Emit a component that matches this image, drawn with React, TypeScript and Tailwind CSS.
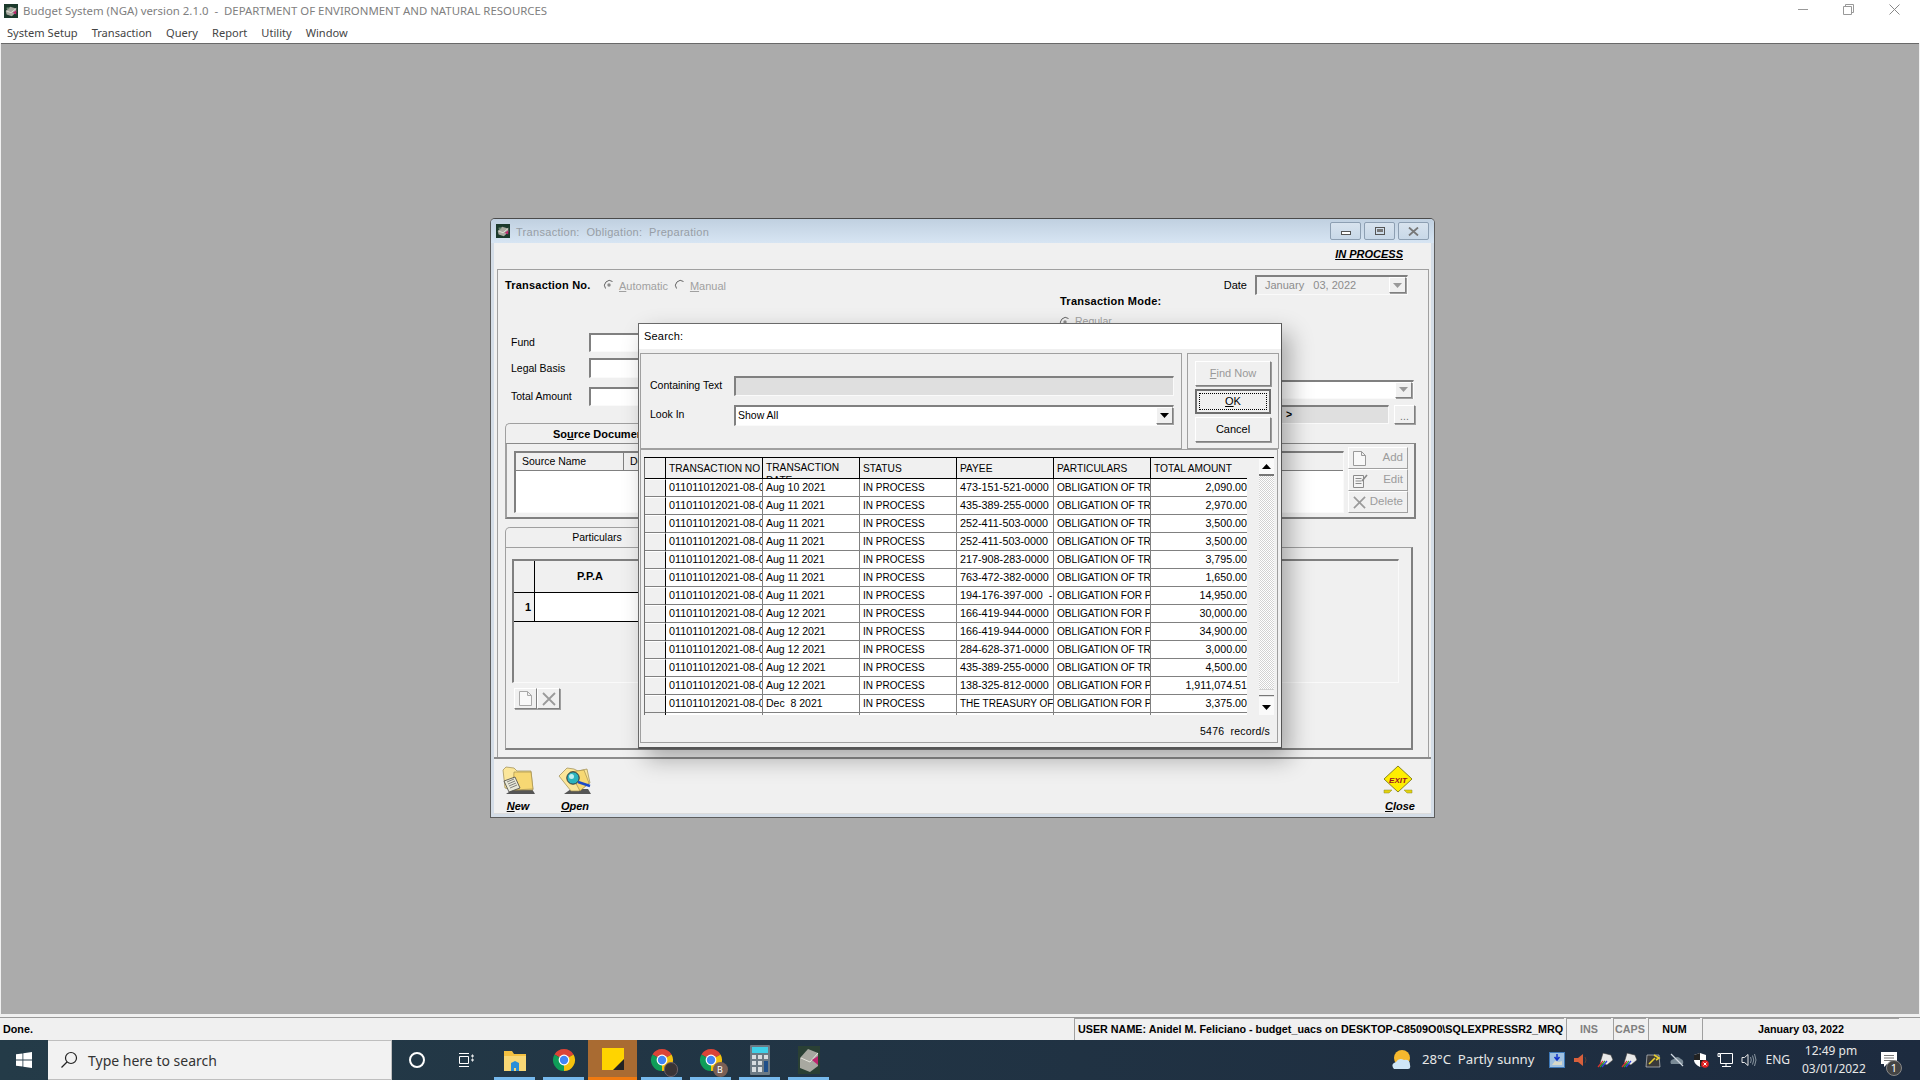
import React from "react";

const ui = "font-['Liberation_Sans',Arial,sans-serif]";
const seg = "font-['Noto_Sans','Open_Sans',sans-serif]";
const raised = "border border-t-white border-l-white border-r-[#808080] border-b-[#808080] shadow-[1px_1px_0_#a0a0a0] bg-[#f0f0f0]";
const sunken = "border-t-2 border-l-2 border-t-[#808080] border-l-[#808080] border-r border-b border-r-[#fafafa] border-b-[#fafafa]";

const AppIcon = ({ s = 14 }: { s?: number }) => (
  <svg width={s} height={s} viewBox="0 0 16 16" className="shrink-0">
    <rect width="16" height="16" fill="#1c3a2c" />
    <path d="M2 8 7 3l7 2v4l-5 5-6-2z" fill="#a9a9a0" />
    <path d="M3 8l5 2 6-5" stroke="#e4e4dc" fill="none" />
    <path d="M10 10l4-3v5z" fill="#c0266e" />
    <path d="M3 4h3v2H3z" fill="#6a8a70" />
  </svg>
);

const Chrome = ({ badge }: { badge?: "b" | "p" }) => (
  <span className="relative block w-[24px] h-[24px]">
    <svg width="24" height="24" viewBox="0 0 24 24">
      <path d="M12 12 2.47 6.5A11 11 0 0 1 21.53 6.5z" fill="#db4437" />
      <path d="M12 12 21.53 6.5A11 11 0 0 1 12 23z" fill="#f4c20d" />
      <path d="M12 12 12 23A11 11 0 0 1 2.47 6.5z" fill="#0f9d58" />
      <circle cx="12" cy="12" r="5.4" fill="#fff" />
      <circle cx="12" cy="12" r="4.2" fill="#4285f4" />
    </svg>
    {badge === "b" && (
      <span className="absolute right-[-5px] bottom-[-5px] w-[15px] h-[15px] rounded-full bg-[#7a5f55] text-white text-[9px] leading-[15px] text-center">B</span>
    )}
    {badge === "p" && <span className="absolute right-[-4px] bottom-[-5px] w-[14px] h-[15px] rounded-full bg-[#3a3436] border border-[#6f6066]" />}
  </span>
);

const Radio = ({ on }: { on?: boolean }) => (
  <svg width="12" height="12" viewBox="0 0 12 12" className="shrink-0">
    <circle cx="6" cy="6" r="5" fill="#f0f0f0" />
    <path d="M2.5 9.5A5 5 0 0 1 9.5 2.5" stroke="#666" fill="none" />
    {on && <circle cx="6" cy="6" r="1.7" fill="#8a8a8a" />}
  </svg>
);

const Arrow = ({ up, color = "#000" }: { up?: boolean; color?: string }) => (
  <svg width="9" height="5" viewBox="0 0 9 5">
    <path d={up ? "M4.5 0 9 5H0z" : "M0 0h9L4.5 5z"} fill={color} />
  </svg>
);

const DocIcon = ({ c = "#9a9a9a" }: { c?: string }) => (
  <svg width="13" height="15" viewBox="0 0 13 15">
    <path d="M.5.5h8l4 4v10H.5zM8.5.5v4h4" fill="#f8f8f8" stroke={c} />
  </svg>
);

const XIcon = ({ s = 14 }: { s?: number }) => (
  <svg width={s} height={s} viewBox="0 0 14 14">
    <path d="M1 1l12 12M13 1 1 13" stroke="#9a9a9a" strokeWidth="1.8" />
  </svg>
);

const EditIcon = () => (
  <svg width="15" height="15" viewBox="0 0 15 15">
    <path d="M.5 2.5h10v12H.5z" fill="#f4f4f4" stroke="#8a8a8a" />
    <path d="M2.5 5.5h6M2.5 8h6M2.5 10.5h6" stroke="#8a8a8a" />
    <path d="M9 8l5-6" stroke="#8a8a8a" strokeWidth="1.6" />
  </svg>
);

const FolderNew = () => (
  <svg width="33" height="32" viewBox="0 0 33 32">
    <path d="M4 30 11 25h19l3 5z" fill="#555" />
    <path d="M1 6l3-3 8 1 3 3 14 0 2 19-20 0L3 24z" fill="#fbe69a" stroke="#9b8a50" strokeWidth=".7" />
    <path d="M12 8h17l2 17-20 1z" fill="#f7d873" stroke="#a58f4d" strokeWidth=".7" />
    <path d="M2 17l11-4 5 11-11 4z" fill="#e8e8d8" stroke="#444" strokeWidth=".8" />
    <path d="M5 18l7-3M6 20l7-3M7 22l7-3M8 24l7-3" stroke="#666" strokeWidth=".8" />
  </svg>
);

const FolderOpen = () => (
  <svg width="34" height="32" viewBox="0 0 34 32">
    <path d="M6 30 13 25h17l3 5z" fill="#555" />
    <path d="M1 12 9 4l7 1 4 2 9-2 3 14-11 8L13 27z" fill="#fbe69a" stroke="#9b8a50" strokeWidth=".7" />
    <path d="M12 8l14-2 5 13-9 8z" fill="#f7d873" stroke="#a58f4d" strokeWidth=".7" />
    <circle cx="15" cy="14" r="6.2" fill="#2bb3bd" stroke="#333" strokeWidth="1" />
    <circle cx="13.5" cy="12.5" r="2.5" fill="#bdf0f0" />
    <path d="M20 18l12 4" stroke="#1b49c8" strokeWidth="2.4" />
  </svg>
);

const ExitIcon = () => (
  <svg width="30" height="30" viewBox="0 0 30 30">
    <path d="M1 25h8l-3 3H1zM29 25h-8l3 3h5z" fill="#e3d20c" stroke="#8a8a30" strokeWidth=".5" />
    <path d="M15 1 29 14 15 27 1 14z" fill="#ffee00" stroke="#8a8620" strokeWidth="1" />
    <text x="15" y="17.5" textAnchor="middle" fontSize="8" fontWeight="700" fill="#9a1020" fontFamily="Liberation Sans">EXIT</text>
  </svg>
);

const rows = [
  ["Aug 10 2021", "473-151-521-0000", "OBLIGATION OF TRAVEL", "2,090.00"],
  ["Aug 11 2021", "435-389-255-0000", "OBLIGATION OF TRAVEL", "2,970.00"],
  ["Aug 11 2021", "252-411-503-0000", "OBLIGATION OF TRAVEL", "3,500.00"],
  ["Aug 11 2021", "252-411-503-0000", "OBLIGATION OF TRAVEL", "3,500.00"],
  ["Aug 11 2021", "217-908-283-0000", "OBLIGATION OF TRAVEL", "3,795.00"],
  ["Aug 11 2021", "763-472-382-0000", "OBLIGATION OF TRAVEL", "1,650.00"],
  ["Aug 11 2021", "194-176-397-000  -", "OBLIGATION FOR PAYMENT", "14,950.00"],
  ["Aug 12 2021", "166-419-944-0000", "OBLIGATION FOR PAYMENT", "30,000.00"],
  ["Aug 12 2021", "166-419-944-0000", "OBLIGATION FOR PAYMENT", "34,900.00"],
  ["Aug 12 2021", "284-628-371-0000", "OBLIGATION OF TRAVEL", "3,000.00"],
  ["Aug 12 2021", "435-389-255-0000", "OBLIGATION OF TRAVEL", "4,500.00"],
  ["Aug 12 2021", "138-325-812-0000", "OBLIGATION FOR PAYMENT", "1,911,074.51"],
  ["Dec  8 2021", "THE TREASURY OF THE", "OBLIGATION FOR PAYMENT", "3,375.00"],
];

const cols = "grid grid-cols-[21px_97px_97px_97px_97px_97px_97px]";
const cell = "border-r border-b border-[#808080] overflow-hidden whitespace-pre pl-[3px] leading-[17px] h-[18px] bg-white text-black";

const Grid = () => (
  <div className="flex h-[258px] border-t border-black">
    <div className="w-[603px] bg-[#f0f0f0] flex flex-col overflow-hidden border-l border-[#707070]">
      <div className={cols + " h-[21px] shrink-0 border-b border-black text-[10.2px] text-black"}>
        <div className="border-r border-black bg-[#f0f0f0]" />
        {["TRANSACTION NO", "TRANSACTION DATE", "STATUS", "PAYEE", "PARTICULARS", "TOTAL AMOUNT"].map((h, i) => (
          <div key={h} className={"border-r border-black pl-[3px] overflow-hidden " + (i === 1 ? "leading-[13px] pt-[3px] whitespace-normal" : "leading-[21px] whitespace-nowrap")}>{h}</div>
        ))}
      </div>
      {rows.map((r, i) => (
        <div key={i} className={cols + " shrink-0"}>
          <div className="border-r border-r-black border-b border-b-[#808080] border-t border-t-white bg-[#f0f0f0] h-[18px]" />
          <div className={cell + " text-[10.8px] pl-[2px]"}>011011012021-08-000{i + 120}</div>
          <div className={cell + " text-[10.5px] pl-[2px]"}>{r[0]}</div>
          <div className={cell + " text-[10px] pl-[2px]"}>IN PROCESS</div>
          <div className={cell + (i === 12 ? " text-[10px]" : " text-[10.8px]")}>{r[1]}</div>
          <div className={cell + " text-[10.1px]"}>{r[2]}</div>
          <div className={cell + " text-[10.7px] text-right pl-0"}>{r[3]}</div>
        </div>
      ))}
      <div className={cols + " h-[3px] shrink-0"}>
        <div className="border-r border-black" />
        {[0, 1, 2, 3, 4, 5].map((i) => <div key={i} className="border-r border-[#808080] bg-white" />)}
      </div>
    </div>
    <div className="w-[12px] bg-[#f0f0f0]" />
    <div className="w-[15px] flex flex-col mt-px">
      <div className="h-[17px] bg-[#fafafa] border-b-2 border-b-[#777] flex items-center justify-center"><Arrow up /></div>
      <div className="flex-1 bg-[repeating-conic-gradient(#d2d2d2_0_25%,#ffffff_0_50%)] bg-size-[2px_2px]" />
      <div className="h-[7px] bg-[#f4f4f4] border-t border-[#d0d0d0] border-b border-b-[#777]" />
      <div className="h-[19px] bg-[#fafafa] border-t border-[#e0e0e0] flex items-center justify-center pt-[3px]"><Arrow /></div>
    </div>
  </div>
);

const DlgBtn = ({ children, dim, def }: { children: React.ReactNode; dim?: boolean; def?: boolean }) => (
  <div className={"h-[25px] flex items-center justify-center text-[11px] " + (def ? "border-2 border-[#6e6e6e] bg-[#f0f0f0]" : "border border-t-white border-l-white border-r-[#808080] border-b-[#808080] shadow-[1px_1px_0_#9a9a9a] bg-[#f0f0f0]") + (dim ? " text-[#999]" : " text-black")}>
    {def ? <span className="w-[68px] h-[17px] border border-dotted border-black flex items-center justify-center">{children}</span> : children}
  </div>
);

const Dialog = () => (
  <div className={ui + " absolute left-[637px] top-[279px] w-[644px] h-[426px] border border-[#6a6a6a] border-r-[#555] border-b-2 border-b-[#555] bg-[#f0f0f0] shadow-[8px_10px_22px_rgba(0,0,0,0.3)] flex flex-col"}>
    <div className="h-[25px] bg-white pl-[5px] text-[11px] leading-[25px] text-black tracking-[0.2px]">Search:</div>
    <div className="flex gap-[5px] pl-[1px] pr-[2px] pt-[4px]">
      <div className="w-[542px] h-[96px] border border-[#a0a0a0] pt-[22px] pl-[9px] text-[10.5px] text-black">
        <div className="flex items-center h-[20px]">
          <span className="w-[84px]">Containing Text</span>
          <div className={sunken + " w-[440px] h-[20px] bg-[#dfdfdf]"} />
        </div>
        <div className="flex items-center h-[20px] mt-[9px]">
          <span className="w-[84px]">Look In</span>
          <div className={sunken + " w-[440px] h-[21px] bg-white flex items-center justify-between pl-[2px]"}>
            <span>Show All</span>
            <div className={raised + " w-[17px] h-[17px] flex items-center justify-center"}><Arrow /></div>
          </div>
        </div>
      </div>
      <div className="w-[92px] h-[96px] border border-[#a0a0a0] pt-[7px] px-[7px] flex flex-col gap-[3px]">
        <DlgBtn dim><span><span className="underline">F</span>ind Now</span></DlgBtn>
        <DlgBtn def><span><span className="underline">O</span>K</span></DlgBtn>
        <DlgBtn>Cancel</DlgBtn>
      </div>
    </div>
    <div className="ml-[1px] mr-[3px] h-[294px] border border-[#a0a0a0] px-[3px] pt-[7px]">
      <Grid />
      <div className="text-right pr-[4px] text-[10.5px] leading-[33px] tracking-[0.2px] text-black whitespace-pre">5476  record/s</div>
    </div>
  </div>
);

const GhostBtn = ({ icon, label }: { icon: React.ReactNode; label: string }) => (
  <div className="h-[22px] flex items-center justify-between px-[4px] border-t border-l border-t-white border-l-white border-r border-b border-r-[#a0a0a0] border-b-[#a0a0a0] bg-[#f0f0f0] text-[11.5px] text-[#9c9c9c]">
    {icon}
    <span>{label}</span>
  </div>
);

const ChildWindow = () => (
  <div className={ui + " absolute left-[489px] top-[174px] w-[945px] h-[600px] rounded-t-[5px] border border-[#5c5c5c] border-t-[#4a4a4a] bg-[#d4dde7] pl-[3px] pr-[3px] pb-[3px] flex flex-col"}>
    <div className="h-[24px] shrink-0 -mx-[3px] rounded-t-[4px] bg-[linear-gradient(180deg,#c0d0e0,#d7e5f3)] flex items-center pl-[5px] pr-[5px]">
      <AppIcon />
      <span className="ml-[6px] mt-[2px] text-[11px] text-[#979ea6] tracking-[0.3px] whitespace-pre">Transaction:  Obligation:  Preparation</span>
      <div className="ml-auto flex gap-[3px]">
        {["min", "max", "close"].map((k) => (
          <div key={k} className="w-[31px] h-[18px] rounded-[2px] border border-[#8d9fb2] bg-[linear-gradient(180deg,#d8e3ee,#c8d8e8)] flex items-center justify-center">
            {k === "min" && <span className="block w-[10px] h-[4px] border border-[#555] bg-white mt-[4px]" />}
            {k === "max" && <span className="block w-[10px] h-[8px] border border-[#555] p-[1px]"><span className="block w-full h-[3px] bg-[#777]" /></span>}
            {k === "close" && <svg width="11" height="9" viewBox="0 0 11 9"><path d="M1 .5l9 8M10 .5l-9 8" stroke="#777" strokeWidth="1.8" /></svg>}
          </div>
        ))}
      </div>
    </div>
    <div className="flex-1 bg-[#f0f0f0] flex flex-col min-h-0">
      <div className="h-[26px] shrink-0 flex items-center justify-end pr-[28px] pb-[3px] text-[11px] font-bold italic underline text-black">IN PROCESS</div>
      <div className="h-[488px] shrink-0 ml-[3px] mr-[2px] border border-[#a0a0a0] border-b-0 pl-[7px] pr-[12px] flex flex-col">
        <div className="h-[153px] shrink-0 flex text-[10.5px] text-black">
          <div className="w-[555px]">
            <div className="h-[20px] mt-[5px] flex items-center">
              <span className="w-[98px] text-[11px] font-bold tracking-[0.2px]">Transaction No.</span>
              <Radio on />
              <span className="ml-[4px] mt-[3px] text-[11px] text-[#a0a0a0]"><span className="underline">A</span>utomatic</span>
              <span className="ml-[6px]"><Radio /></span>
              <span className="ml-[4px] mt-[3px] text-[11px] text-[#a0a0a0]"><span className="underline">M</span>anual</span>
            </div>
            <div className="h-[19px] mt-[38px] flex items-center pl-[6px]"><span className="w-[78px]">Fund</span><div className={sunken + " w-[100px] h-full bg-white"} /></div>
            <div className="h-[20px] mt-[6px] flex items-center pl-[6px]"><span className="w-[78px] mt-px">Legal Basis</span><div className={sunken + " w-[100px] h-full bg-white"} /></div>
            <div className="h-[19px] mt-[9px] flex items-center pl-[6px]"><span className="w-[78px]">Total Amount</span><div className={sunken + " w-[100px] h-full bg-white"} /></div>
          </div>
          <div className="w-[356px] flex flex-col">
            <div className="h-[20px] mt-[5px] flex items-center justify-end pr-[8px]">
              <span className="mr-[8px] text-[11px]">Date</span>
              <div className={sunken + " w-[153px] h-full flex items-center justify-between pl-[8px] pr-[1px] text-[11px] text-[#8c8c8c] whitespace-pre"}>
                <span>January   03, 2022</span>
                <div className={raised + " w-[17px] h-[16px] flex items-center justify-center"}><Arrow color="#999" /></div>
              </div>
            </div>
            <div className="text-[11px] font-bold leading-[12px] tracking-[0.25px]">Transaction Mode:</div>
            <div className="h-[14px] mt-[8px] flex items-center -ml-px"><Radio on /><span className="ml-[4px] text-[#a0a0a0]">Regular</span></div>
            <div className="h-[19px] mt-[51px] ml-auto mr-[2px] w-[170px] flex">
              <div className={sunken + " w-full bg-white flex justify-end pr-[1px]"}>
                <div className={raised + " w-[17px] h-[16px] flex items-center justify-center"}><Arrow color="#999" /></div>
              </div>
            </div>
            <div className="h-[19px] mt-[6px] mr-[1px] flex justify-end gap-[5px]">
              <div className={sunken + " w-[170px] bg-[#dfdfdf] font-bold pl-[65px] leading-[15px]"}>&gt;</div>
              <div className={raised + " w-[21px] text-[#707070] text-center leading-[20px]"}>...</div>
            </div>
          </div>
        </div>

        <div className="h-[20px] shrink-0 w-[220px] rounded-tl-[5px] border-t border-l border-[#a0a0a0] text-[11px] font-bold text-black leading-[20px] pl-[47px]">
          So<span className="underline">u</span>rce Document
        </div>
        <div className="h-[76px] shrink-0 border border-[#e0e0e0] border-t-[#8a8a8a] border-r-2 border-r-[#808080] border-b-2 border-b-[#808080] border-l-2 border-l-[#a0a0a0] pl-[7px] pr-[6px] pt-[7px] flex gap-[4px]">
          <div className={sunken + " w-[830px] h-[62px] bg-white text-[10.5px] text-black"}>
            <div className="h-[18px] bg-[#f0f0f0] flex border-b border-[#808080]">
              <span className="w-[108px] pl-[6px] leading-[17px] border-r border-[#808080]">Source Name</span>
              <span className="pl-[6px] leading-[17px]">Document</span>
            </div>
          </div>
          <div className="w-[60px] flex flex-col mt-[-4px]">
            <GhostBtn icon={<DocIcon />} label="Add" />
            <GhostBtn icon={<EditIcon />} label="Edit" />
            <GhostBtn icon={<XIcon s={13} />} label="Delete" />
          </div>
        </div>

        <div className="h-[20px] shrink-0 mt-[8px] w-[184px] rounded-tl-[5px] border-t border-l border-r border-[#a0a0a0] text-[10.5px] text-black text-center leading-[18px]">Particulars</div>
        <div className="w-[908px] h-[203px] shrink-0 border border-t-[#a0a0a0] border-r-2 border-r-[#808080] border-b-2 border-b-[#808080] border-l-[#a0a0a0] pl-[6px] pr-[13px] pt-[11px]">
          <div className={sunken + " w-[887px] h-[124px]"}>
            <div className="w-[720px] flex h-[32px] border-b border-black text-[11px] font-bold text-black">
              <div className="w-[21px] border-r border-black" />
              <div className="w-[110px] text-center leading-[31px]">P.P.A</div>
            </div>
            <div className="w-[720px] flex h-[29px] border-b border-black text-[11px] font-bold text-black">
              <div className="w-[21px] border-r border-black text-right pr-[3px] leading-[28px]">1</div>
              <div className="flex-1 bg-white" />
            </div>
          </div>
          <div className="flex ml-[2px] mt-[5px]">
            <div className={raised + " w-[23px] h-[21px] flex items-center justify-center"}><DocIcon c="#a8a8a8" /></div>
            <div className={raised + " w-[23px] h-[21px] flex items-center justify-center"}><XIcon /></div>
          </div>
        </div>
      </div>
      <div className="flex-1 border-t-2 border-t-[#8c8c8c] border-b border-b-[#dcdcdc] flex items-start pl-[8px] pr-[15px] pt-[5px] text-[11px] font-bold italic text-black">
        <div className="w-[32px] flex flex-col items-center"><FolderNew /><span className="mt-[4px] leading-[13px]"><span className="underline">N</span>ew</span></div>
        <div className="w-[34px] ml-[24px] flex flex-col items-center"><FolderOpen /><span className="mt-[4px] leading-[13px]"><span className="underline">O</span>pen</span></div>
        <div className="ml-auto w-[32px] pt-px flex flex-col items-center"><span className="mr-[4px]"><ExitIcon /></span><span className="mt-[5px] leading-[13px]"><span className="underline">C</span>lose</span></div>
      </div>
    </div>
  </div>
);

const Tray = () => (
  <div className="flex items-center gap-[8px]">
    <svg width="16" height="16" viewBox="0 0 16 16"><rect width="16" height="16" fill="#3d78b8" /><rect x="1" y="1" width="14" height="14" fill="#9fc0e0" /><path d="M8 2v5M5.5 5 8 8l2.5-3" stroke="#1030c8" strokeWidth="1.5" fill="none" /><path d="M3 13l3-4 4 1 3-1v4z" fill="#d8d8c8" /></svg>
    <svg width="16" height="16" viewBox="0 0 16 16"><path d="M1 6h4l5-4v12L5 10H1z" fill="#d8603c" /><path d="M12 5q2 3 0 6" stroke="#5a4038" fill="none" /></svg>
    {[0, 1].map((i) => (
      <svg key={i} width="16" height="16" viewBox="0 0 16 16"><path d="M6 1l8 2 2 5-6 5-7-2z" fill="#e8e8e8" stroke="#333" strokeWidth=".6" /><path d="M1 15l5-6" stroke="#e03030" strokeWidth="1.2" /><path d="M3 15l5-6" stroke="#30a030" strokeWidth="1.2" /><path d="M5 15l5-6" stroke="#3040e0" strokeWidth="1.2" /></svg>
    ))}
    <svg width="16" height="16" viewBox="0 0 16 16"><path d="M2 3h12l1 12H1z" fill="#3a3a3a" stroke="#ddd" strokeWidth=".6" /><path d="M4 12l6-6M9 3l5 3-3 2" stroke="#e8d030" strokeWidth="1.6" fill="none" /></svg>
    <svg width="16" height="16" viewBox="0 0 16 16"><path d="M2 12q-2-4 3-5 3-4 7 0 3 1 2 5z" fill="#7a8a96" /><path d="M2 2l12 12" stroke="#d0d8e0" strokeWidth="1.2" /></svg>
    <svg width="16" height="16" viewBox="0 0 16 16"><path d="M7 1l6 2v5q0 4-6 7-6-3-6-7V3z" fill="#fff" /><path d="M7 1v7H1V3zM7 8h6q0 4-6 7z" fill="#222" /><circle cx="12" cy="12" r="3.8" fill="#e02020" /><path d="M10.5 10.5l3 3M13.500 10.500l-3 3" stroke="#fff" /></svg>
    <svg width="16" height="16" viewBox="0 0 16 16" fill="none" stroke="#fff"><path d="M3.500 1.500h12v10h-12zM1 1.500h2v3H1zM9 11.500v3M5 14.500h9" /></svg>
    <svg width="16" height="16" viewBox="0 0 16 16" fill="none" stroke="#e8e8e8"><path d="M1 5.500h2.500L7 2.500v11L3.500 10.500H1z" /><path d="M9.500 5q1.500 3 0 6M11.500 3.500q2.500 4.500 0 9M13.500 2q3 6 0 12" stroke="#8a96a0" /></svg>
  </div>
);

export default function App() {
  return (
    <div className="relative w-[1920px] h-[1080px] overflow-hidden flex flex-col bg-[#f0f0f0]">
      <div className={seg + " h-[22px] shrink-0 bg-white flex items-center pl-[2px] text-[#808080]"}>
        <span className="ml-[2px] mr-[5px]"><AppIcon s={14} /></span>
        <span className="text-[11.4px] whitespace-pre">Budget System (NGA) version 2.1.0  -  DEPARTMENT OF ENVIRONMENT AND NATURAL RESOURCES</span>
        <div className="ml-auto flex items-center pr-[20px] pb-[3px]">
          <span className="block w-[10px] h-px bg-[#999]" />
          <svg width="11" height="11" viewBox="0 0 11 11" fill="none" stroke="#999" className="ml-[35px]"><path d="M.5 2.500h8v8h-8zM2.500 2.500v-2h8v8h-2" /></svg>
          <svg width="11" height="11" viewBox="0 0 11 11" stroke="#888" className="ml-[35px]"><path d="M.5.5l10 10M10.500.5l-10 10" /></svg>
        </div>
      </div>
      <div className={seg + " h-[21px] shrink-0 bg-white flex items-start pl-[7px] gap-[14px] text-[11.1px] text-[#444] leading-[21px]"}>
        {["System Setup", "Transaction", "Query", "Report", "Utility", "Window"].map((m) => <span key={m}>{m}</span>)}
      </div>
      <div className="relative flex-1 mx-px mb-[3px] bg-[#ababab] border-t border-t-[#696969]">
        <ChildWindow />
        <Dialog />
      </div>
      <div className={ui + " h-[23px] shrink-0 border-t border-t-[#9a9a9a] bg-[#f0f0f0] flex items-center text-[10.75px] font-bold text-black whitespace-nowrap"}>
        <span className="w-[1074px] pl-[3px] leading-[20px] pb-px">Done.</span>
        <div className="h-[22px] w-[490px] border-t border-l border-[#a0a0a0] pl-[3px] leading-[20px] overflow-hidden">USER NAME: Anidel M. Feliciano - budget_uacs on DESKTOP-C8509O0\SQLEXPRESSR2_MRQ</div>
        <div className="h-[22px] w-[45px] ml-[2px] border-t border-l border-[#a0a0a0] text-center leading-[20px] text-[#808080]">INS</div>
        <div className="h-[22px] w-[33px] ml-[2px] border-t border-l border-[#a0a0a0] text-center leading-[20px] text-[#808080]">CAPS</div>
        <div className="h-[22px] w-[52px] ml-[2px] border-t border-l border-[#a0a0a0] text-center leading-[20px]">NUM</div>
        <div className="h-[22px] w-[197px] ml-[2px] border-t border-l border-[#a0a0a0] text-center leading-[20px]">January 03, 2022</div>
      </div>
      <div className={seg + " h-[40px] shrink-0 bg-[linear-gradient(90deg,#243b48,#1d2b3f)] flex items-stretch text-white"}>
        <div className="w-[48px] flex items-center justify-center">
          <svg width="16" height="16" viewBox="0 0 16 16" fill="#fff"><path d="M0 2.300 6.500 1.400v6.200H0zM7.300 1.300 16 0v7.600H7.300zM0 8.400h6.500v6.200L0 13.700zM7.300 8.400H16V16l-8.700-1.200z" /></svg>
        </div>
        <div className="w-[344px] bg-[#f2f2f2] border-t border-b border-[#bfbfbf] border-r flex items-center pl-[12px] text-[#333] text-[14px]">
          <svg width="18" height="18" viewBox="0 0 18 18" fill="none" stroke="#222" strokeWidth="1.200"><circle cx="11" cy="7" r="5.500" /><path d="M7 11l-5.500 5.500" /></svg>
          <span className="ml-[10px]">Type here to search</span>
        </div>
        {[
          <span key="a" className="block w-[16px] h-[16px] rounded-full border-2 border-white" />,
          <svg key="b" width="16" height="16" viewBox="0 0 16 16" fill="none" stroke="#fff"><path d="M1.500 4.500h9v7h-9zM1 1.500h10M1 14.500h10M14 3v2h1V3zM14 7v2h1V7z" /></svg>,
          <svg key="c" width="24" height="24" viewBox="0 0 24 24"><path d="M1 3h8l2 3h12v17H1z" fill="#f3c041" /><path d="M1 8h22v15H1z" fill="#f8d775" /><path d="M8 23v-8l4-2 4 2v8h-3v-3h-2v3z" fill="#2a8fd8" /></svg>,
          <Chrome key="d" />,
          <svg key="e" width="24" height="24" viewBox="0 0 24 24"><path d="M1 1h22v22H1z" fill="#ffd400" /><path d="M12 23 23 12v11z" fill="#222" /></svg>,
          <Chrome key="f" badge="p" />,
          <Chrome key="g" badge="b" />,
          <svg key="h" width="20" height="30" viewBox="0 0 20 30"><rect width="20" height="30" rx="1" fill="#6c7a84" /><rect x="2" y="2" width="16" height="6" fill="#3fd0e8" /><g fill="#d8dde0"><rect x="2" y="10" width="4" height="4" /><rect x="8" y="10" width="4" height="4" /><rect x="14" y="10" width="4" height="4" /><rect x="2" y="16" width="4" height="4" /><rect x="8" y="16" width="4" height="4" /><rect x="2" y="22" width="4" height="5" /><rect x="8" y="22" width="4" height="5" /></g><rect x="14" y="16" width="4" height="11" fill="#1f4f8a" /></svg>,
          <svg key="i" width="22" height="28" viewBox="0 0 22 28"><rect width="22" height="28" fill="#2a4034" /><path d="M2 12 10 3l10 4v13l-8 6-10-4z" fill="#a8a8a0" /><path d="M3 12l9 4 8-9" stroke="#e6e6de" fill="none" /><path d="M14 14l6-4v9z" fill="#c0266e" /></svg>,
        ].map((ic, i) => (
          <div key={i} className={"w-[49px] relative flex items-center justify-center " + (i === 4 ? "bg-[#a96b32] border-b-[3px] border-b-[#f07a10]" : "")}>
            {ic}
            {[2, 3, 5, 6, 7, 8].includes(i) && <span className="absolute bottom-0 left-[4px] right-[4px] h-[3px] bg-[#76b9ed]" />}
          </div>
        ))}
        <div className="ml-auto flex items-center">
          <svg width="22" height="22" viewBox="0 0 22 22"><circle cx="11" cy="9" r="8" fill="#f5b82e" /><path d="M3 20q-4-5 2-7 3-5 8-2 6-1 6 5 1 4-2 4z" fill="#cfe6f7" /></svg>
          <span className="ml-[9px] text-[13.2px] whitespace-pre text-[#e8e8e8]">28°C  Partly sunny</span>
          <span className="ml-[15px]"><Tray /></span>
          <span className="ml-[8px] text-[12px] text-[#e8e8e8]">ENG</span>
          <div className="ml-[12px] w-[58px] text-center text-[12px] leading-[18px] text-[#e8e8e8]"><div>12:49 pm</div><div>03/01/2022</div></div>
          <div className="relative ml-[21px] mr-[23px] w-[16px] h-[16px]">
            <svg width="16" height="15" viewBox="0 0 16 15"><path d="M0 0h16v12H6l-3 3v-3H0z" fill="#fff" /><path d="M3 3.500h10M3 6h10M3 8.500h10" stroke="#777" /></svg>
            <span className="absolute left-[5px] top-[8px] w-[16px] h-[16px] rounded-full bg-[#444] border border-[#888] text-[11px] leading-[14px] text-center">1</span>
          </div>
        </div>
      </div>
    </div>
  );
}
